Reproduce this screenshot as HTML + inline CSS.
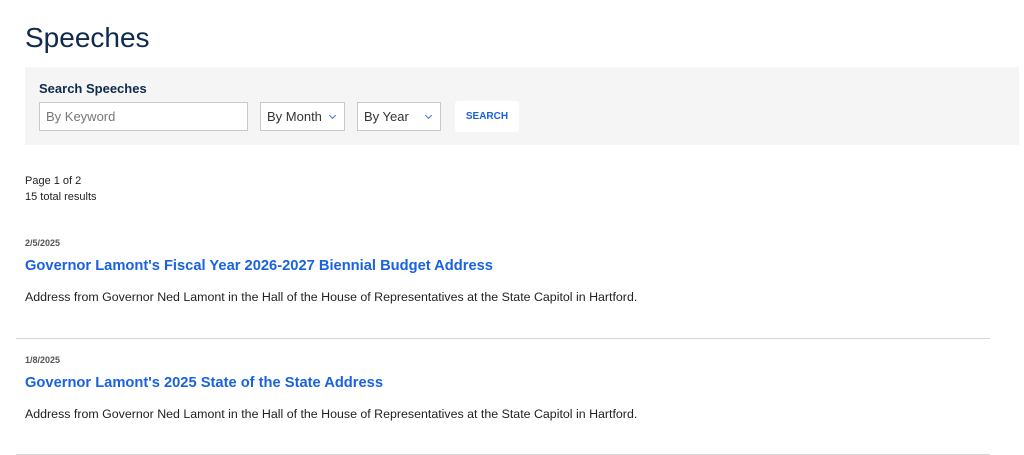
<!DOCTYPE html>
<html><head><style>
*{margin:0;padding:0;box-sizing:border-box}
body{width:1024px;height:455px;overflow:hidden;background:#fff;font-family:"Liberation Sans",Arial,sans-serif;position:relative}
.a{position:absolute;white-space:nowrap}
h1{position:absolute;left:25px;top:22px;font-size:28px;font-weight:normal;color:#0e2a4f}
.box{position:absolute;left:25px;top:67px;width:994px;height:78px;background:#f5f5f5}
.inp{position:absolute;top:102px;height:29px;background:#fff;border:1px solid #c9c9c9;font-size:13px;color:#333;padding:6px 6px}
.chev{position:absolute;top:10px;width:5px;height:5px;border-right:1.2px solid #3a7bd5;border-bottom:1.2px solid #3a7bd5;transform:rotate(45deg)}
.date{font-size:9px;font-weight:bold;color:#555}
.t{font-size:14.7px;font-weight:bold;color:#1a62e0}
.d{font-size:12.4px;color:#222}
.hr{position:absolute;left:16px;width:974px;height:1px;background:#d5d5d5}
</style></head><body>
<h1>Speeches</h1>
<div class="box"></div>
<div class="a" style="left:39px;top:81px;font-size:13px;font-weight:bold;color:#0e2a4f">Search Speeches</div>
<div class="inp" style="left:39px;width:209px;color:#777">By Keyword</div>
<div class="inp" style="left:260px;width:85px">By Month<span class="chev" style="left:69px"></span></div>
<div class="inp" style="left:357px;width:84px">By Year<span class="chev" style="left:68px"></span></div>
<div class="a" style="left:455px;top:101px;width:64px;height:31px;background:#fff;border-radius:3px;font-size:10px;font-weight:bold;color:#1a62e0;text-align:center;line-height:32px">SEARCH</div>
<div class="a" style="left:25px;top:175px;font-size:11px;color:#222">Page 1 of 2</div>
<div class="a" style="left:25px;top:191px;font-size:11px;color:#222">15 total results</div>
<div class="a date" style="left:25px;top:238px">2/5/2025</div>
<div class="a t" style="left:25px;top:258px">Governor Lamont's Fiscal Year 2026-2027 Biennial Budget Address</div>
<div class="a d" style="left:25px;top:290px">Address from Governor Ned Lamont in the Hall of the House of Representatives at the State Capitol in Hartford.</div>
<div class="hr" style="top:338px"></div>
<div class="a date" style="left:25px;top:355px">1/8/2025</div>
<div class="a t" style="left:25px;top:375px">Governor Lamont's 2025 State of the State Address</div>
<div class="a d" style="left:25px;top:407px">Address from Governor Ned Lamont in the Hall of the House of Representatives at the State Capitol in Hartford.</div>
<div class="hr" style="top:454px"></div>
</body></html>
